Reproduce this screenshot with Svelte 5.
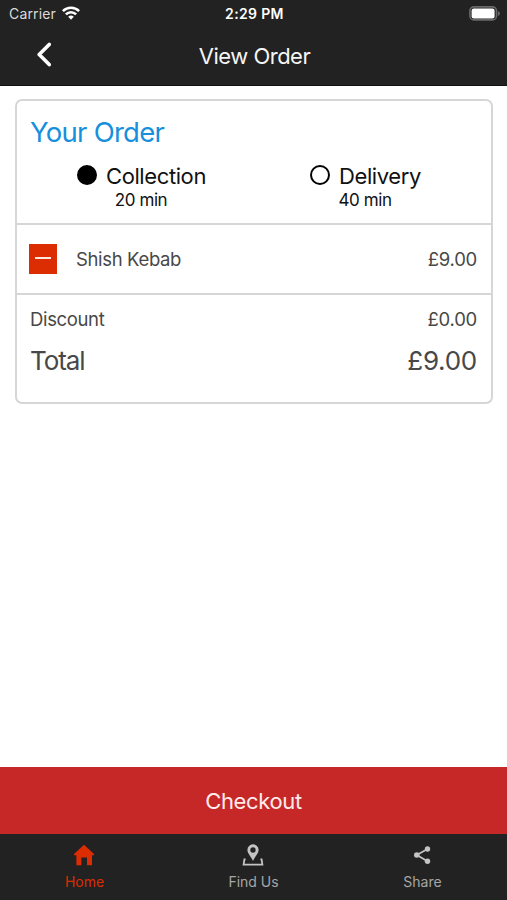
<script>
  let method = $state("collection");

  const methods = [
    { id: "collection", label: "Collection", time: "20 min" },
    { id: "delivery", label: "Delivery", time: "40 min" },
  ];

  const items = [{ name: "Shish Kebab", price: 9 }];
  const discount = 0;
  const total = items.reduce((sum, item) => sum + item.price, 0) - discount;

  const money = (value) => "£" + value.toFixed(2);
</script>

<div class="screen">
  <div class="status">
    <div class="carrier">
      <span>Carrier</span>
      <svg width="18" height="14" viewBox="0 0 18 14" fill="none" stroke="#fff" stroke-width="2.6">
        <path d="M.9 5.1a11.5 11.5 0 0 1 16.2 0" />
        <path d="M3.9 8.4a7.2 7.2 0 0 1 10.2 0" />
        <path d="M9 13.7 6.2 10.8a4 4 0 0 1 5.6 0z" fill="#fff" stroke="none" />
      </svg>
    </div>
    <span class="clock">2:29 PM</span>
    <svg class="battery" width="31" height="15" viewBox="0 0 31 15">
      <rect x=".9" y=".9" width="26.6" height="13" rx="4" fill="none" stroke="#69696b" stroke-width="1.6" />
      <rect x="2.6" y="2.6" width="23" height="9.8" rx="2.2" fill="#fff" />
      <path d="M28.9 5q2 .8 2 2.5t-2 2.5z" fill="#69696b" />
    </svg>
  </div>

  <header>
    <button class="back" aria-label="Back">
      <svg width="16" height="26" viewBox="0 0 16 26" fill="none" stroke="#fff" stroke-width="3.6" stroke-linecap="round" stroke-linejoin="round">
        <path d="M13.2 2.4 3.2 12.5l10 10.1" />
      </svg>
    </button>
    <h1>View Order</h1>
  </header>

  <main>
    <section class="card">
      <div class="top">
        <h2>Your Order</h2>
        <div class="methods">
          {#each methods as m}
            <button class="method" onclick={() => (method = m.id)}>
              <span class="choice">
                <span class="radio" class:checked={method === m.id}></span>
                <span class="label">{m.label}</span>
              </span>
              <span class="time">{m.time}</span>
            </button>
          {/each}
        </div>
      </div>

      {#each items as item}
        <div class="item">
          <button class="remove" aria-label="Remove"><i></i></button>
          <span class="name">{item.name}</span>
          <span class="price">{money(item.price)}</span>
        </div>
      {/each}

      <div class="sums">
        <div class="row">
          <span>Discount</span>
          <span class="price">{money(discount)}</span>
        </div>
        <div class="row total">
          <span class="total-label">Total</span>
          <span class="amount">{money(total)}</span>
        </div>
      </div>
    </section>
  </main>

  <button class="checkout"><span>Checkout</span></button>

  <nav>
    <a href="#home" class="active">
      <svg width="22" height="22" viewBox="0 0 22 22" fill="currentColor">
        <path d="M11 .8 21 10.1v1.1h-2v10h-5v-7.800H8.400v7.800h-5v-10H1v-1.100z" />
      </svg>
      <span>Home</span>
    </a>
    <a href="#find">
      <svg width="22" height="22" viewBox="0 0 22 22">
        <path d="M11 .3a5.6 5.6 0 0 0-5.6 5.6c0 3.5 3.6 6.4 5.6 11 2-4.6 5.6-7.5 5.6-11A5.6 5.6 0 0 0 11 .3zm0 3a2.7 2.7 0 1 1 0 5.4 2.7 2.7 0 0 1 0-5.4z" fill="#c4c4c4" fill-rule="evenodd" />
        <path d="M3.6 15.4H2.4L1.6 20.700h18.800l-.8-5.300h-1.200" fill="none" stroke="#c4c4c4" stroke-width="1.8" />
      </svg>
      <span>Find Us</span>
    </a>
    <a href="#share">
      <svg width="22" height="22" viewBox="0 0 22 22" fill="#c4c4c4">
        <path d="M16.5 5 5.8 11l10.7 6.2" fill="none" stroke="#c4c4c4" stroke-width="1.7" />
        <circle cx="16.500" cy="5" r="2.700" />
        <circle cx="5.8" cy="11" r="2.8" />
        <circle cx="16.500" cy="17.200" r="2.700" />
      </svg>
      <span>Share</span>
    </a>
  </nav>
</div>

<style>
  :global(body) {
    background: #fff;
  }

  .screen {
    display: flex;
    flex-direction: column;
    height: 900px;
    background: #fff;
    font-family: Inter, "Liberation Sans", sans-serif;
    color: #484848;
  }

  h1,
  h2 {
    margin: 0;
    font-weight: 400;
  }

  button {
    border: 0;
    padding: 0;
    background: none;
    font: inherit;
    color: inherit;
  }

  svg {
    display: block;
  }

  span {
    white-space: nowrap;
  }

  /* Status bar and header */
  .status {
    display: grid;
    grid-template-columns: 1fr auto 1fr;
    align-items: center;
    box-sizing: border-box;
    height: 27px;
    padding: 0 7px 0 9px;
    background: #222;
    color: #fff;
    font-size: 14px;
  }

  .carrier {
    display: flex;
    gap: 6px;
    color: #dadada;
    letter-spacing: 0.15px;
  }

  .carrier svg {
    margin-top: 1px;
  }

  .clock {
    font-weight: 600;
    letter-spacing: 0.35px;
  }

  .battery {
    justify-self: end;
  }

  header {
    display: grid;
    grid-template-columns: 1fr auto 1fr;
    align-items: center;
    box-sizing: border-box;
    height: 59px;
    border-bottom: 1px solid #111;
    background: #222;
    color: #f5f5f5;
  }

  .back {
    margin: -2px 0 0 36px;
    justify-self: start;
  }

  h1 {
    padding-left: 2px;
    font-size: 22px;
    line-height: 28px;
    letter-spacing: -0.5px;
  }

  /* Order card */
  main {
    flex: 1;
    padding: 13px 14px 0 15px;
  }

  .card {
    box-sizing: border-box;
    height: 305px;
    border: 2px solid #d6d6d6;
    border-radius: 7px;
  }

  .top {
    box-sizing: border-box;
    height: 124px;
    padding-top: 14px;
    border-bottom: 2px solid #d6d6d6;
  }

  h2 {
    padding-left: 13px;
    font-size: 27.5px;
    line-height: 34px;
    letter-spacing: -0.75px;
    color: #168fdd;
  }

  .methods {
    display: grid;
    grid-template-columns: 1fr 1fr;
    margin-top: 12px;
    padding: 0 14px 0 12px;
    color: #111;
  }

  .method {
    display: flex;
    flex-direction: column;
    align-items: center;
  }

  .choice {
    display: flex;
    align-items: center;
    gap: 9px;
    padding-left: 1px;
    font-size: 22px;
    line-height: 28px;
    letter-spacing: -0.4px;
  }

  .label {
    padding-top: 1px;
  }

  .radio {
    box-sizing: border-box;
    width: 20px;
    height: 20px;
    margin-bottom: 2px;
    border: 2px solid #000;
    border-radius: 50%;
  }

  .checked {
    background: #000;
  }

  .time {
    font-size: 17px;
    line-height: 20px;
    letter-spacing: -0.4px;
  }

  .item {
    display: flex;
    align-items: center;
    box-sizing: border-box;
    height: 70px;
    padding: 0 14px 0 12px;
    border-bottom: 2px solid #d6d6d6;
    font-size: 18.5px;
    letter-spacing: -0.35px;
  }

  .remove {
    display: grid;
    place-items: center;
    width: 28px;
    height: 30px;
    margin-right: 19px;
    background: #dc2c02;
  }

  .remove i {
    width: 16px;
    height: 2px;
    margin-top: -2px;
    background: #ffe9df;
  }

  .name {
    flex: 1;
  }

  .price,
  .amount {
    letter-spacing: -0.25px;
  }

  .sums {
    padding: 11px 14px 0 13px;
    font-size: 18.5px;
    letter-spacing: -0.35px;
  }

  .row {
    display: flex;
    justify-content: space-between;
    line-height: 26px;
  }

  .total {
    margin-top: 11px;
    font-size: 26px;
    line-height: 36px;
  }

  .total-label {
    letter-spacing: -1.1px;
  }

  /* Bottom */
  .checkout {
    height: 67px;
    background: #c62828;
    color: #ffebeb;
    font-size: 22px;
    letter-spacing: -0.35px;
  }

  nav {
    display: grid;
    grid-template-columns: repeat(3, 1fr);
    height: 66px;
    background: #222;
  }

  nav a {
    display: flex;
    flex-direction: column;
    align-items: center;
    padding-top: 10px;
    color: #a6a6a6;
    font-size: 14px;
    line-height: 18px;
    text-decoration: none;
  }

  nav svg {
    margin-right: 1px;
  }

  nav span {
    margin-top: 7px;
  }

  nav .active {
    color: #dc2c02;
  }
</style>
